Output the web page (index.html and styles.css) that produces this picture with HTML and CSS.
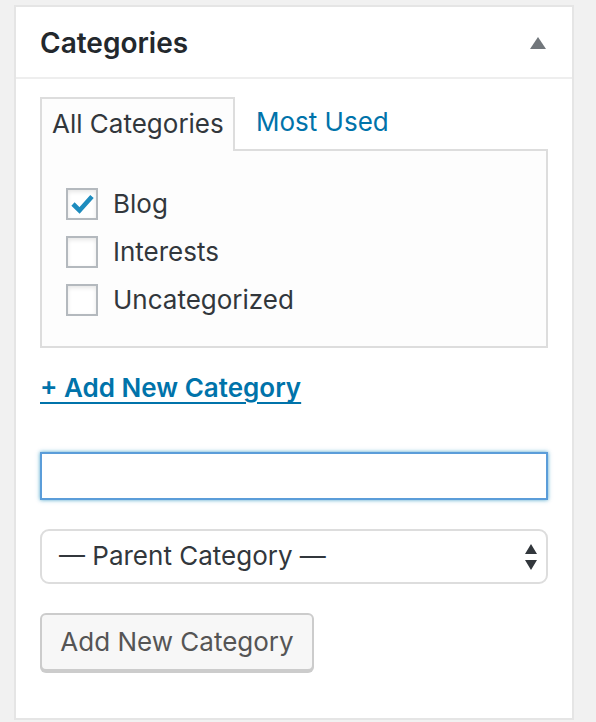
FILE: index.html
```html
<!DOCTYPE html>
<html>
<head>
<meta charset="utf-8">
<link rel="stylesheet" href="styles.css">
</head>
<body>
<div class="postbox">
  <div class="hndle">
    <h2 class="title">Categories</h2>
    <span class="toggle"></span>
  </div>
  <div class="inside">
    <ul class="tabs">
      <li class="tab active">All Categories</li>
      <li class="tab link">Most Used</li>
    </ul>
    <div class="tabs-panel">
      <ul class="checklist">
        <li><span class="cb checked"><svg viewBox="0 0 32 32" width="32" height="32"><path d="M7 16 L13.5 22.5 L26 8.5" fill="none" stroke="#1e8cbe" stroke-width="4.6" stroke-linecap="butt" stroke-linejoin="miter"/></svg></span><span class="lbl">Blog</span></li>
        <li><span class="cb"></span><span class="lbl">Interests</span></li>
        <li><span class="cb"></span><span class="lbl">Uncategorized</span></li>
      </ul>
    </div>
    <div class="add-link">+ Add New Category</div>
    <div class="field"><div class="input"></div></div>
    <div class="select"><span class="sel-text">— Parent Category —</span><span class="arrows"><svg viewBox="0 0 14 26" width="14" height="26"><path d="M7 0 L13 10 L1 10 Z M1 16 L13 16 L7 26 Z" fill="#32373c"/></svg></span></div>
    <div class="btn">Add New Category</div>
  </div>
</div>
</body>
</html>
```

FILE: styles.css
```css
* { box-sizing: border-box; }
html, body { margin: 0; }
body {
  background: #f1f1f1;
  padding: 5px 22px 0 14px;
  font-family: Inter, "Noto Sans", "Liberation Sans", sans-serif;
  color: #32373c;
}
.postbox {
  width: 560px;
  height: 715px;
  background: #fff;
  border: 2px solid #e5e5e5;
}
.hndle {
  height: 72px;
  border-bottom: 2px solid #eee;
  display: flex;
  align-items: center;
  justify-content: space-between;
  padding: 0 26px 0 24px;
}
.title {
  margin: 0;
  font-size: 28px;
  font-weight: 600;
  color: #23282d;
  padding-top: 2px;
}
.toggle {
  width: 0; height: 0;
  border-left: 8px solid transparent;
  border-right: 8px solid transparent;
  border-bottom: 12px solid #72777c;
  margin-top: 2px;
}
.inside {
  padding: 18px 24px 0 24px;
}
.tabs {
  list-style: none;
  margin: 0;
  padding: 0;
  display: flex;
  height: 52px;
  position: relative;
  z-index: 1;
}
.tab {
  font-size: 26px;
  line-height: 50px;
  white-space: nowrap;
}
.tab.active {
  border: 2px solid #ddd;
  border-bottom: none;
  background: #fdfdfd;
  padding: 0 10px;
  height: 54px;
  width: 195px;
  color: #32373c;
}
.tab.link {
  color: #0073aa;
  padding: 0 0 0 21px;
}
.tabs-panel {
  width: 508px;
  height: 199px;
  border: 2px solid #ddd;
  background: #fdfdfd;
  padding: 29px 0 0 24px;
}
.checklist {
  list-style: none;
  margin: 0;
  padding: 0;
}
.checklist li {
  display: flex;
  align-items: center;
  height: 48px;
}
.cb {
  width: 32px; height: 32px;
  border: 2px solid #b4b9be;
  background: #fff;
  box-shadow: inset 0 2px 4px rgba(0,0,0,0.1);
  display: flex;
  align-items: center;
  justify-content: center;
  flex: none;
}
.cb svg { display: block; margin: -2px; }
.lbl {
  font-size: 26px;
  margin-left: 15px;
  color: #32373c;
  padding-bottom: 2px;
}
.add-link {
  margin-top: 24px;
  font-size: 26px;
  font-weight: 600;
  color: #0073aa;
  text-decoration: underline;
  text-decoration-thickness: 2px;
  text-underline-offset: 5px;
  line-height: 32px;
}
.field { margin-top: 48px; }
.input {
  width: 508px;
  height: 48px;
  border: 2px solid #5b9dd9;
  background: #fff;
  box-shadow: 0 0 4px rgba(30,140,190,0.8);
}
.select {
  margin-top: 29px;
  width: 508px;
  height: 55px;
  border: 2px solid #ddd;
  border-radius: 9px;
  background: #fff;
  display: flex;
  align-items: center;
  justify-content: space-between;
  padding: 0 8px 0 17px;
  font-size: 26px;
  color: #32373c;
}
.sel-text {
  padding-bottom: 2px;
}
.arrows svg { display: block; }
.btn {
  margin-top: 29px;
  width: 274px;
  height: 58px;
  border: 2px solid #ccc;
  border-radius: 6px;
  background: #f7f7f7;
  box-shadow: 0 2px 0 #ccc;
  display: flex;
  align-items: center;
  justify-content: center;
  font-size: 26px;
  color: #555;
  padding-bottom: 2px;
}
```
